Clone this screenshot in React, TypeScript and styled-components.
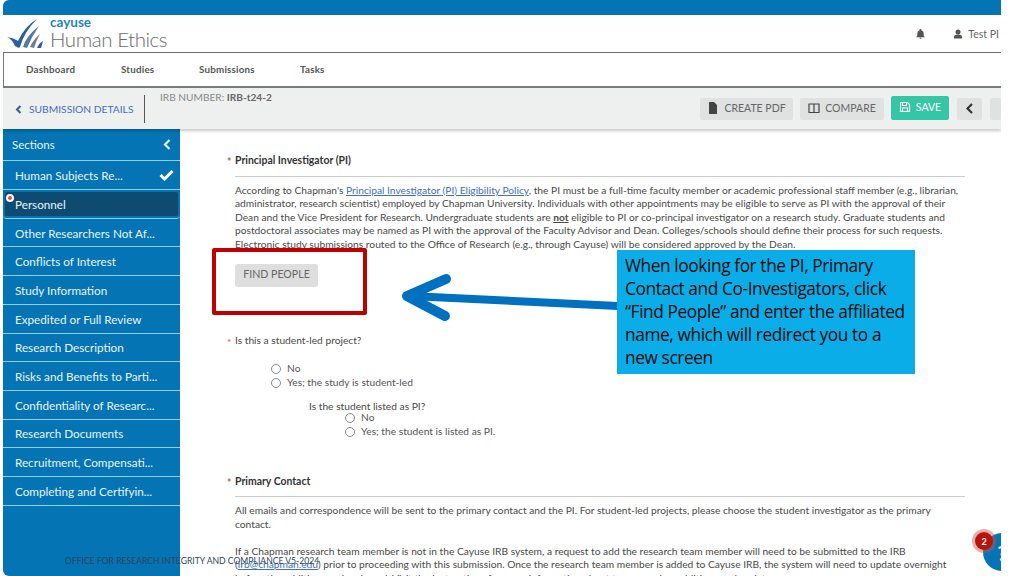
import React from "react";
import styled, { createGlobalStyle } from "styled-components";

const Global = createGlobalStyle`
  html, body { margin: 0; padding: 0; background: #fff; }
  body { font-family: Lato, "Liberation Sans", sans-serif; color: #444; width: 1024px; height: 576px; overflow: hidden; }
  * { box-sizing: border-box; }
`;

const Stage = styled.div`
  position: relative;
  width: 1024px;
  height: 576px;
  overflow: hidden;
  padding-left: 3px;
`;
const Frame = styled.div`
  width: 998px;
  height: 576px;
  display: flex;
  flex-direction: column;
  overflow: hidden;
`;
const TopBar = styled.div`
  height: 15px;
  flex: none;
  background: #0474b4;
  border-top-left-radius: 6px;
`;
const Brand = styled.header`
  height: 38px;
  flex: none;
  display: flex;
  align-items: center;
  justify-content: space-between;
  background: #fff;
  border-bottom: 1px solid #6f6f6f;
  padding: 0 2px 0 4px;
`;
const Logo = styled.div`
  display: flex;
  align-items: flex-end;
  gap: 7px;
`;
const LogoWords = styled.div`
  display: flex;
  flex-direction: column;
  margin-top: -3px;
`;
const Cayuse = styled.span`
  font-size: 13.5px;
  font-weight: 700;
  line-height: 11px;
  color: #1f86c4;
`;
const Human = styled.span`
  font-size: 20.5px;
  font-weight: 300;
  line-height: 22px;
  letter-spacing: -0.45px;
  color: #6b6b6b;
`;
const UserArea = styled.div`
  display: flex;
  align-items: center;
  font-size: 10.5px;
  color: #666;
`;
const UserIcon = styled.svg`
  width: 10px;
  height: 10px;
  fill: #555;
  margin-left: 27px;
  margin-right: 5px;
`;
const BellIcon = styled.svg`
  width: 11px;
  height: 11px;
  fill: #555;
`;
const Nav = styled.nav`
  height: 35px;
  flex: none;
  display: flex;
  align-items: center;
  background: #fff;
  padding: 0 0 2px 22px;
  border-left: 1px solid #777;
  border-bottom: 2px solid #7c7c7c;
`;
const NavItem = styled.span<{ $w: number }>`
  width: ${(p) => p.$w}px;
  font-size: 9.8px;
  font-weight: 700;
  color: #555;
  letter-spacing: 0.2px;
`;
const Toolbar = styled.div`
  height: 41px;
  flex: none;
  display: flex;
  align-items: flex-start;
  background: #eef0f0;
  box-shadow: 0 2px 3px rgba(0, 0, 0, 0.22);
  position: relative;
  z-index: 1;
`;
const Back = styled.div`
  width: 142px;
  height: 28px;
  margin-top: 7px;
  padding-left: 12px;
  display: flex;
  align-items: center;
  gap: 7px;
  font-size: 10.25px;
  color: #3e6fc0;
  border-right: 1px solid #555;
`;
const Irb = styled.div`
  margin: 3px 0 0 15px;
  font-size: 10.15px;
  color: #888;
  flex: 1;
  b { color: #666; }
`;
const Tools = styled.div`
  display: flex;
  gap: 7px;
  margin-top: 10px;
`;
const ToolButton = styled.div<{ $w: number; $save?: boolean }>`
  width: ${(p) => p.$w}px;
  height: ${(p) => (p.$save ? 24 : 22)}px;
  margin-top: ${(p) => (p.$save ? -2 : 0)}px;
  padding-bottom: 2px;
  border-radius: 2px;
  display: flex;
  align-items: center;
  justify-content: center;
  gap: 5px;
  font-size: 10.5px;
  background: ${(p) => (p.$save ? "#35c7a5" : "#e0e1e1")};
  color: ${(p) => (p.$save ? "#fff" : "#666")};
`;
const SquareBtn = styled(ToolButton)`
  color: #333;
  margin-left: 1px;
  overflow: hidden;
`;
const BtnIcon = styled.svg`
  width: 12px;
  height: 12px;
  flex: none;
`;
const Body = styled.div`
  flex: 1;
  display: flex;
  min-height: 0;
`;
const Side = styled.aside`
  width: 177px;
  flex: none;
  background: #0474b4;
  border-bottom-left-radius: 6px;
  color: #e9f5fb;
`;
const SideHead = styled.div`
  height: 32.4px;
  display: flex;
  align-items: center;
  justify-content: space-between;
  padding: 0 9px;
  font-size: 11.5px;
  border-bottom: 1px solid #8fd0ee;
`;
const SideRow = styled.div<{ $active?: boolean }>`
  height: 28.7px;
  position: relative;
  display: flex;
  align-items: center;
  justify-content: space-between;
  padding: 0 6px 0 12px;
  font-size: 11.7px;
  border-bottom: 1px solid #8fd0ee;
  ${(p) => (p.$active ? "background: #0d4b70; box-shadow: inset 0 0 0 2px #0474b4; border-radius: 4px;" : "")}
`;
const ErrorDot = styled.span`
  position: absolute;
  left: 3px;
  top: 4px;
  width: 8px;
  height: 8px;
  border-radius: 50%;
  background: #e84b4b;
  border: 2px solid #fff;
`;
const Main = styled.main`
  flex: 1;
  min-width: 0;
  background: #fff;
  padding: 25px 36px 0 55px;
  overflow: hidden;
  font-size: 10.22px;
  line-height: 13.6px;
  color: #4a4a4a;
`;
const Req = styled.span`
  position: absolute;
  left: -8px;
  top: 2px;
  color: #d9534f;
`;
const FieldLabel = styled.div<{ $bold?: boolean; $top?: number }>`
  position: relative;
  font-weight: ${(p) => (p.$bold ? 700 : 400)};
  font-size: ${(p) => (p.$bold ? 10.45 : 10.22)}px;
  margin-top: ${(p) => p.$top ?? 0}px;
  color: ${(p) => (p.$bold ? "#333" : "#4a4a4a")};
`;
const Rule = styled.hr`
  border: 0;
  border-top: 1px solid #ccc;
  margin: 8px 0 7px;
`;
const Para = styled.p<{ $top?: number }>`
  margin: ${(p) => p.$top ?? 0}px 0 0;
  a { color: #3e6fc0; }
`;
const FindBtn = styled.div`
  width: 83px;
  height: 23px;
  margin-top: 12px;
  border-radius: 3px;
  background: #dedede;
  color: #666;
  font-size: 10.6px;
  display: flex;
  align-items: center;
  justify-content: center;
`;
const RadioRow = styled.label<{ $indent: number; $top?: number }>`
  display: flex;
  align-items: center;
  gap: 6px;
  margin-left: ${(p) => p.$indent}px;
  margin-top: ${(p) => p.$top ?? 0}px;
  height: 14px;
  color: #555;
`;
const RadioCircle = styled.span`
  width: 10px;
  height: 10px;
  border-radius: 50%;
  border: 1px solid #8a8a8a;
  background: #fff;
  flex: none;
`;
const SubLabel = styled.div`
  margin: 10px 0 -3px 74px;
`;

const RedBox = styled.div`
  position: absolute;
  left: 212px;
  top: 248px;
  width: 155px;
  height: 67px;
  border: 4.500px solid #c00000;
  border-radius: 2px;
`;
const Arrow = styled.svg`
  position: absolute;
  left: 398px;
  top: 270px;
  width: 222px;
  height: 60px;
`;
const Callout = styled.div`
  position: absolute;
  left: 617px;
  top: 250px;
  width: 298px;
  height: 124px;
  padding: 4px 8px;
  background: #0bade8;
  color: #0b0b0b;
  font-family: "Open Sans", "Noto Sans", sans-serif;
  font-size: 17.3px;
  line-height: 23.1px;
  letter-spacing: -0.4px;
`;
const Footer = styled.div`
  position: absolute;
  left: 65px;
  top: 555px;
  font-size: 8.6px;
  line-height: 12px;
  color: #2f4658;
  white-space: nowrap;
`;
const HelpWrap = styled.div`
  position: absolute;
  left: 983px;
  top: 533px;
  width: 18px;
  height: 38px;
  overflow: hidden;
`;
const HelpCircle = styled.div`
  width: 38px;
  height: 38px;
  border-radius: 50%;
  background: #0474b4;
  color: #fff;
  font-size: 21px;
  font-weight: 700;
  display: flex;
  align-items: center;
  justify-content: center;
`;
const Badge = styled.div`
  position: absolute;
  left: 975px;
  top: 532px;
  width: 18px;
  height: 18px;
  border-radius: 50%;
  background: #b9140b;
  box-shadow: 0 0 0 3px rgba(200, 80, 70, 0.45);
  color: #fff;
  font-size: 9px;
  font-weight: 700;
  display: flex;
  align-items: center;
  justify-content: center;
`;

const sections = [
  "Human Subjects Re...",
  "Personnel",
  "Other Researchers Not Af...",
  "Conflicts of Interest",
  "Study Information",
  "Expedited or Full Review",
  "Research Description",
  "Risks and Benefits to Parti...",
  "Confidentiality of Researc...",
  "Research Documents",
  "Recruitment, Compensati...",
  "Completing and Certifyin...",
];

export default function App() {
  return (
    <Stage>
      <Global />
      <Frame>
        <TopBar />
        <Brand>
          <Logo>
            <svg width="36" height="33" viewBox="0 0 36 33">
              <path d="M0 20 Q5 22 8 29 Q12 32 13 30 Q17 15 30 2 Q18 9 11 24 Q7 21 0 20Z" fill="#2b5f9e" />
              <path d="M16 30 Q19 19 32 9 Q25 19 20 31Z" fill="#56789c" />
              <path d="M23 30 Q26 23 33 17 Q29 24 27 31Z" fill="#6b7f94" />
              <path d="M30 31 Q32 26 36 24 Q35 28 34 31Z" fill="#2b5f9e" />
            </svg>
            <LogoWords>
              <Cayuse>cayuse</Cayuse>
              <Human>Human Ethics</Human>
            </LogoWords>
          </Logo>
          <UserArea>
            <BellIcon viewBox="0 0 24 24">
              <path d="M12 2a2 2 0 0 0-2 2v1a7 7 0 0 0-5 7v5l-2 2v1h18v-1l-2-2v-5a7 7 0 0 0-5-7V4a2 2 0 0 0-2-2zM9.5 21a2.5 2.5 0 0 0 5 0z" />
            </BellIcon>
            <UserIcon viewBox="0 0 24 24">
              <circle cx="12" cy="7" r="6" />
              <path d="M2 23v-4c0-4 4-6 10-6s10 2 10 6v4z" />
            </UserIcon>
            Test PI
          </UserArea>
        </Brand>
        <Nav>
          <NavItem $w={95}>Dashboard</NavItem>
          <NavItem $w={78}>Studies</NavItem>
          <NavItem $w={101}>Submissions</NavItem>
          <NavItem $w={40}>Tasks</NavItem>
        </Nav>
        <Toolbar>
          <Back>
            <svg width="7" height="9" viewBox="0 0 7 9">
              <path d="M5.5 1 2 4.5 5.5 8" fill="none" stroke="#2b5fa8" strokeWidth="2" />
            </svg>
            SUBMISSION DETAILS
          </Back>
          <Irb>
            IRB NUMBER: <b>IRB-t24-2</b>
          </Irb>
          <Tools>
            <ToolButton $w={93}>
              <BtnIcon viewBox="0 0 12 12">
                <path d="M2 0h5l3 3v9H2z" fill="#444" />
              </BtnIcon>
              CREATE PDF
            </ToolButton>
            <ToolButton $w={84}>
              <BtnIcon viewBox="0 0 12 12">
                <path d="M1 2h10v8.500H1zM6 2v8.500" fill="none" stroke="#444" strokeWidth="1.2" />
              </BtnIcon>
              COMPARE
            </ToolButton>
            <ToolButton $w={58} $save>
              <BtnIcon viewBox="0 0 12 12">
                <path d="M1.500 1.500h7l2 2v7h-9zM3.500 1.500v3h4v-3M3.500 10.500v-3.500h5v3.500" fill="none" stroke="#fff" strokeWidth="1.1" />
              </BtnIcon>
              SAVE
            </ToolButton>
            <SquareBtn $w={25}>
              <svg width="9" height="11" viewBox="0 0 9 11">
                <path d="M7 1 2.500 5.500 7 10" fill="none" stroke="#333" strokeWidth="2.2" />
              </svg>
            </SquareBtn>
            <SquareBtn $w={11} />
          </Tools>
        </Toolbar>
        <Body>
          <Side>
            <SideHead>
              Sections
              <svg width="8" height="11" viewBox="0 0 8 11">
                <path d="M6.500 1 2 5.500 6.500 10" fill="none" stroke="#dff1fa" strokeWidth="2.2" />
              </svg>
            </SideHead>
            {sections.map((s, i) => (
              <SideRow key={s} $active={i === 1}>
                {s}
                {i === 0 && (
                  <svg width="15" height="12" viewBox="0 0 15 12">
                    <path d="M1.500 6 5.500 10 13.500 2" fill="none" stroke="#fff" strokeWidth="3" />
                  </svg>
                )}
                {i === 1 && <ErrorDot />}
              </SideRow>
            ))}
          </Side>
          <Main>
            <FieldLabel $bold>
              <Req>*</Req>Principal Investigator (PI)
            </FieldLabel>
            <Rule />
            <Para>
              According to Chapman's <a href="#p">Principal Investigator (PI) Eligibility Policy</a>, the PI must be a full-time faculty member or academic professional staff member (e.g., librarian, administrator, research scientist) employed by Chapman University. Individuals with other appointments may be eligible to serve as PI with the approval of their Dean and the Vice President for Research. Undergraduate students are <b><u>not</u></b> eligible to PI or co-principal investigator on a research study. Graduate students and postdoctoral associates may be named as PI with the approval of the Faculty Advisor and Dean. Colleges/schools should define their process for such requests. Electronic study submissions routed to the Office of Research (e.g., through Cayuse) will be considered approved by the Dean.
            </Para>
            <FindBtn>FIND PEOPLE</FindBtn>
            <FieldLabel $top={47}>
              <Req>*</Req>Is this a student-led project?
            </FieldLabel>
            <RadioRow $indent={36} $top={15}>
              <RadioCircle />
              No
            </RadioRow>
            <RadioRow $indent={36}>
              <RadioCircle />
              Yes; the study is student-led
            </RadioRow>
            <SubLabel>Is the student listed as PI?</SubLabel>
            <RadioRow $indent={110}>
              <RadioCircle />
              No
            </RadioRow>
            <RadioRow $indent={110}>
              <RadioCircle />
              Yes; the student is listed as PI.
            </RadioRow>
            <FieldLabel $bold $top={36}>
              <Req>*</Req>Primary Contact
            </FieldLabel>
            <Rule />
            <Para>
              All emails and correspondence will be sent to the primary contact and the PI. For student-led projects, please choose the student investigator as the primary contact.
            </Para>
            <Para $top={13}>
              If a Chapman research team member is not in the Cayuse IRB system, a request to add the research team member will need to be submitted to the IRB (<a href="#m">irb@chapman.edu</a>) prior to proceeding with this submission. Once the research team member is added to Cayuse IRB, the system will need to update overnight before the addition can be viewed. Visit the Instructions for more information about team member additions and updates.
            </Para>
          </Main>
        </Body>
      </Frame>
      <RedBox />
      <Arrow viewBox="0 0 222 60">
        <path d="M220 36 L12 26" stroke="#0070c0" strokeWidth="8" fill="none" />
        <path d="M48 9 L9 26 L47 46" stroke="#0070c0" strokeWidth="10" strokeLinecap="round" strokeLinejoin="round" fill="none" />
      </Arrow>
      <Callout>
        When looking for the PI, Primary Contact and Co-Investigators, click “Find People” and enter the affiliated name, which will redirect you to a new screen
      </Callout>
      <Footer>OFFICE FOR RESEARCH INTEGRITY AND COMPLIANCE V5-2024</Footer>
      <HelpWrap>
        <HelpCircle>?</HelpCircle>
      </HelpWrap>
      <Badge>2</Badge>
    </Stage>
  );
}
